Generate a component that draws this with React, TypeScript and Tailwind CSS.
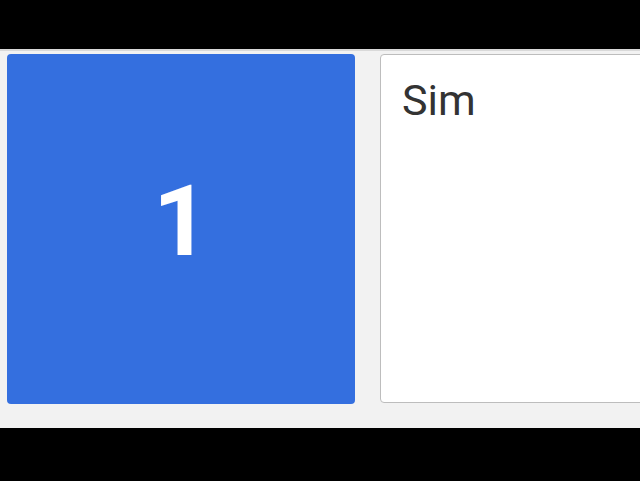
export default function App() {
  return (
    <div className="w-[640px] h-[481px] bg-black flex flex-col overflow-hidden" style={{ fontFamily: "Roboto, 'Liberation Sans', sans-serif" }}>
      <div className="h-[49px] shrink-0 bg-black" />
      <div className="h-[379px] shrink-0 bg-[#f2f2f2] border-t-2 border-[#d9d9d9] flex gap-[25px] pl-[7px] pt-[3px] overflow-hidden">
        <div className="w-[348px] h-[350px] shrink-0 bg-[#346fdf] rounded-[4px] flex items-center justify-center pb-[14px]">
          <span className="text-white text-[98px] font-bold leading-none">1</span>
        </div>
        <div className="w-[400px] h-[349px] shrink-0 bg-white border border-[#bdbdbd] rounded-[4px] px-[21px] pt-[24px]">
          <span className="text-[#333333] text-[43px] leading-none">Sim</span>
        </div>
      </div>
      <div className="flex-1 bg-black" />
    </div>
  );
}
